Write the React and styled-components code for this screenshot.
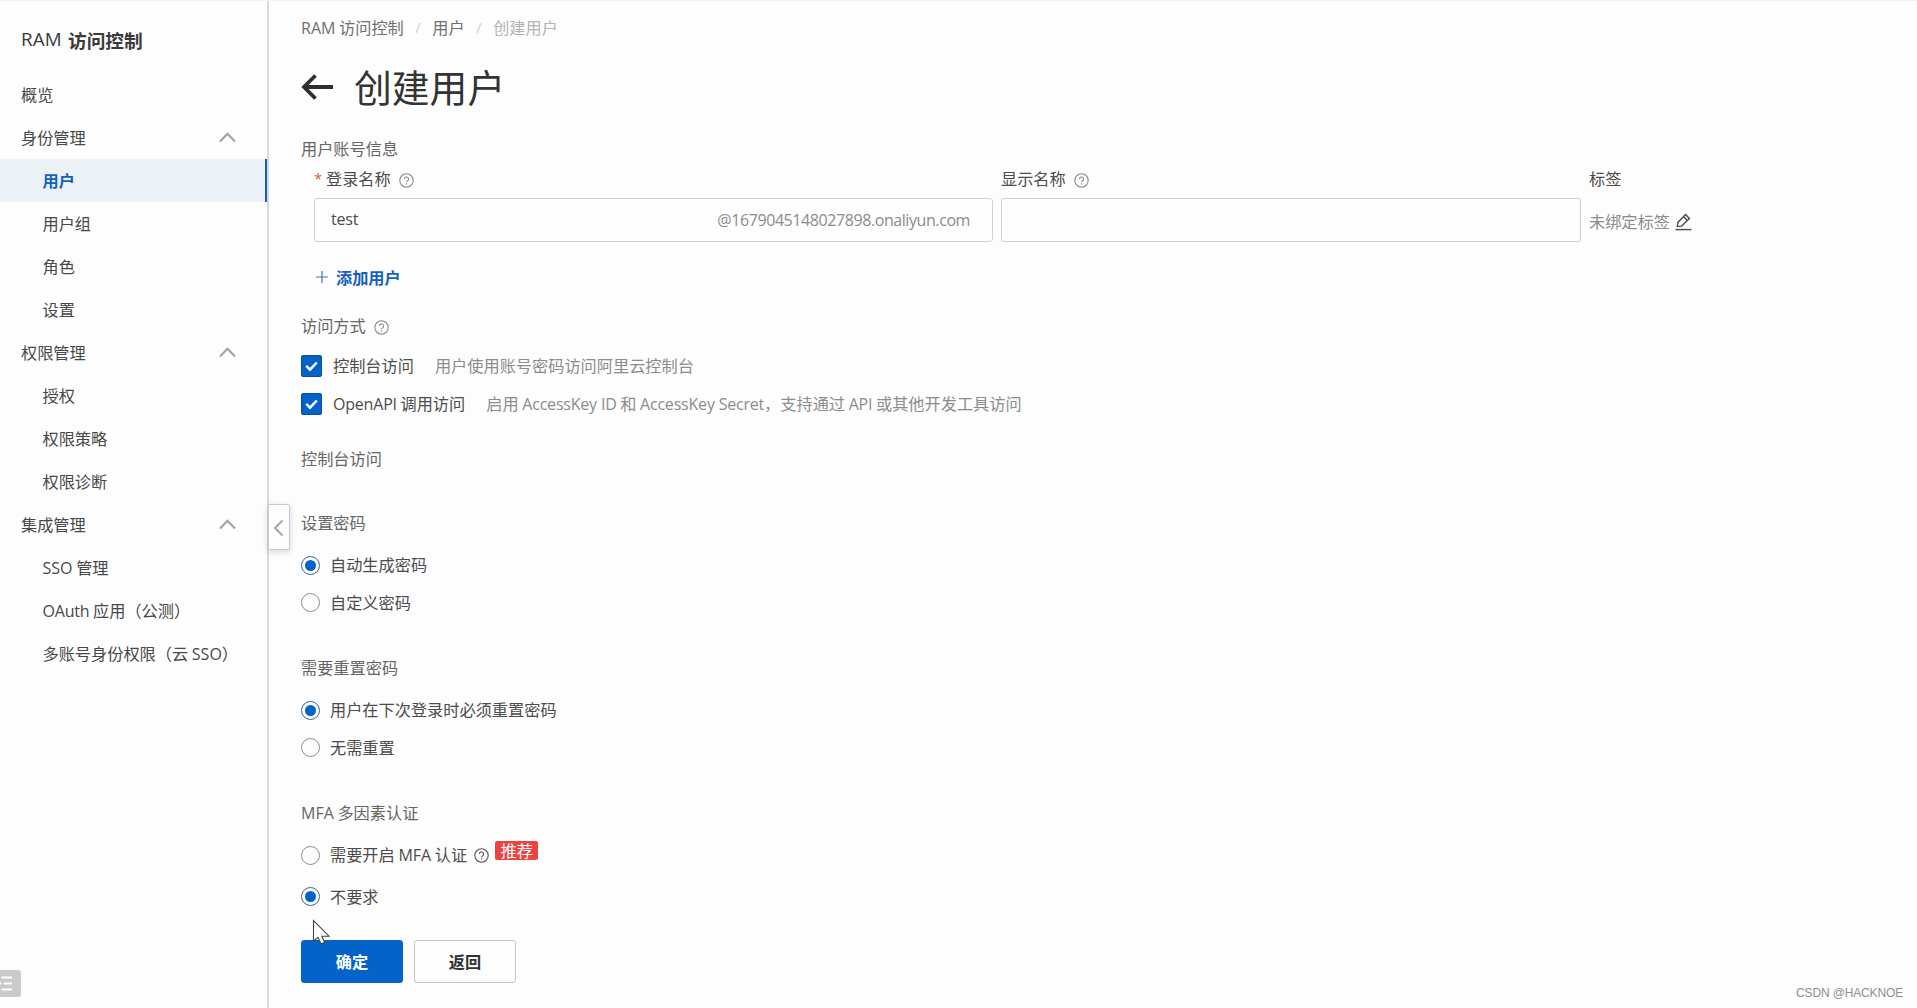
import React, { useState } from "react";
import styled, { createGlobalStyle } from "styled-components";

const Global = createGlobalStyle`
  * { box-sizing: border-box; }
  html, body, #root { height: 100%; margin: 0; }
  body {
    overflow: hidden;
    background: #fdfdfd;
    color: #4c4c4c;
    font-family: "Noto Sans CJK SC", sans-serif;
    font-size: 16.2px;
    line-height: 24px;
  }
`;

const Page = styled.div`
  display: flex;
  height: 1008px;
  width: 1917px;
  position: relative;
  border-top: 1px solid #f1f1f1;
`;

const Latin = styled.span`
  font-family: "Open Sans", "Noto Sans", sans-serif;
  font-size: ${(p) => p.$size || 16}px;
  letter-spacing: ${(p) => (p.$track === undefined ? -0.2 : p.$track)}px;
  font-weight: ${(p) => p.$weight || "inherit"};
  line-height: 1;
`;

/* Sidebar */
const Sidebar = styled.nav`
  width: 269px;
  flex: none;
  border-right: 2px solid #d8d9dc;
  position: relative;
`;
const Brand = styled.h2`
  margin: 0;
  padding: 5px 0 0 21px;
  height: 72px;
  display: flex;
  align-items: center;
  gap: 6px;
  font-size: 18.7px;
  font-weight: 700;
  color: #3a3a3a;
`;
const NavRow = styled.a`
  display: flex;
  align-items: center;
  justify-content: space-between;
  height: 43px;
  padding: 0 31px 0 ${(p) => (p.$sub ? 42.5 : 21)}px;
  white-space: nowrap;
  color: ${(p) => (p.$active ? "#1560bd" : "#484848")};
  font-weight: ${(p) => (p.$active ? 700 : 400)};
  background: ${(p) => (p.$active ? "#ebf1f5" : "transparent")};
  box-shadow: ${(p) => (p.$active ? "inset -2px 0 0 #1560bd" : "none")};
`;
const RaisedText = styled.span`
  padding-bottom: 2px;
`;
const Collapse = styled.button`
  position: absolute;
  left: 268px;
  top: 503px;
  width: 22px;
  height: 46px;
  padding: 2px 1px 0 0;
  display: flex;
  align-items: center;
  justify-content: center;
  background: #fdfdfd;
  border: 1px solid #c9cacc;
  border-radius: 0 2px 2px 0;
  box-shadow: 0 2px 6px rgba(0, 0, 0, 0.16);
`;
const DockTag = styled.div`
  position: absolute;
  left: 0;
  top: 969px;
  width: 21px;
  height: 27px;
  display: flex;
  align-items: center;
  background: #cacaca;
  border-radius: 0 3px 3px 0;
`;

/* Main column */
const Main = styled.main`
  flex: 1;
  padding-left: 32px;
  display: flex;
  flex-direction: column;
`;
const Crumbs = styled.div`
  display: flex;
  align-items: center;
  height: 54px;
  padding-bottom: 2px;
  color: #707070;
`;
const Slash = styled.span`
  width: 28.5px;
  text-align: center;
  font-family: "Open Sans", sans-serif;
  font-size: 15px;
  color: #d0d0d0;
`;
const Muted = styled.span`
  color: ${(p) => p.$tone || "#b4b4b4"};
`;
const TitleRow = styled.div`
  display: flex;
  align-items: center;
  gap: 21px;
  height: 66px;
  padding-bottom: 2px;
`;
const Title = styled.h1`
  margin: -2px 0 0;
  font-size: 37.8px;
  line-height: 48px;
  font-weight: 400;
  color: #333;
`;
const SectionLabel = styled.div`
  display: flex;
  align-items: center;
  gap: 8px;
  height: 24px;
  margin-top: ${(p) => p.$top}px;
  color: #666;
`;
const Fields = styled.div`
  display: grid;
  grid-template-columns: 679px 580px 200px;
  column-gap: 8px;
  margin-left: 13px;
`;
const FieldLabel = styled.label`
  display: flex;
  align-items: center;
  height: 38px;
  padding-bottom: 2px;
  gap: 8px;
`;
const Star = styled.span`
  width: 12px;
  margin-right: -8px;
  color: #d9623f;
  font-family: "Open Sans", sans-serif;
  font-size: 15px;
`;
const InputBox = styled.div`
  display: flex;
  align-items: center;
  justify-content: space-between;
  height: 44px;
  padding: 0 22px 2px 16px;
  border: 1px solid #cfd0d3;
  border-radius: 3px;
`;
const TagCell = styled.div`
  display: flex;
  align-items: center;
  height: 44px;
  padding-top: 1px;
  gap: 5px;
  color: #8c8c8c;
`;
const AddUser = styled.button`
  display: flex;
  align-items: center;
  gap: 8px;
  height: 24px;
  margin: 23px 0 0 15px;
  padding: 0;
  border: 0;
  background: none;
  font: inherit;
  font-weight: 700;
  color: #1560bd;
`;
const CheckRow = styled.div`
  display: flex;
  align-items: center;
  height: 38px;
`;
const CheckSquare = styled.span`
  display: flex;
  align-items: center;
  justify-content: center;
  width: 21px;
  height: 22px;
  margin-right: 11px;
  background: #0463c9;
  border: 1px solid #0a4f9e;
  border-radius: 2px;
`;
const CheckHint = styled.span`
  margin-left: ${(p) => p.$gap}px;
  padding-bottom: 2px;
  color: #8c8c8c;
`;
const OptionGroup = styled.div`
  display: flex;
  flex-direction: column;
  margin-top: ${(p) => p.$top}px;
`;
const RadioRow = styled.label`
  display: flex;
  align-items: center;
  height: ${(p) => p.$height || 37.5}px;
`;
const RadioDot = styled.span`
  display: flex;
  align-items: center;
  justify-content: center;
  width: 19px;
  height: 19px;
  margin-right: 10px;
  border: 1px solid ${(p) => (p.$on ? "#3d6590" : "#84919e")};
  border-radius: 50%;
  &::after {
    content: "";
    width: 11px;
    height: 11px;
    border-radius: 50%;
    background: ${(p) => (p.$on ? "#0463c9" : "transparent")};
  }
`;
const Badge = styled.span`
  display: flex;
  align-items: center;
  justify-content: center;
  width: 43px;
  height: 19px;
  padding-bottom: 1px;
  margin: -10px 0 0 6px;
  border-radius: 2px;
  background: #ec4342;
  color: #fff;
`;
const HelpSlot = styled.span`
  display: flex;
  margin: ${(p) => p.$top}px 0 0 ${(p) => p.$left || 0}px;
`;
const Actions = styled.div`
  display: flex;
  gap: 11px;
  margin-top: 22px;
`;
const Button = styled.button`
  width: 102px;
  height: 43px;
  padding: 0 0 1px;
  border: 1px solid ${(p) => (p.$primary ? "#0463c9" : "#c4c5c9")};
  border-radius: 3px;
  background: ${(p) => (p.$primary ? "#0463c9" : "#fdfdfd")};
  color: ${(p) => (p.$primary ? "#fff" : "#333")};
  font: inherit;
  font-weight: 700;
`;
const Pointer = styled.svg`
  position: absolute;
  left: 312px;
  top: 918px;
`;
const Watermark = styled.div`
  position: absolute;
  right: 14px;
  top: 983px;
  font-family: "Liberation Sans", Arial, sans-serif;
  font-size: 12px;
  line-height: 18px;
  letter-spacing: -0.15px;
  color: #8f8f8f;
`;

const Help = ({ color = "#8a8a8a" }) => (
  <svg width="15" height="15" viewBox="0 0 15 15" fill="none" stroke={color}>
    <circle cx="7.5" cy="7.5" r="6.7" strokeWidth="1.1" />
    <path d="M5.4 6.100a2.100 2.100 0 1 1 3.300 1.700c-.8.5-1.200.8-1.200 1.500" strokeWidth="1.1" />
    <path d="M7.5 10.3v1.2" strokeWidth="1.2" />
  </svg>
);
const ChevronUp = () => (
  <svg width="17" height="11" viewBox="0 0 17 11" fill="none" stroke="#a0a0a0" strokeWidth="2">
    <path d="M1 9.500 8.500 1.800 16 9.500" />
  </svg>
);

const nav = [
  { label: "概览" },
  { label: "身份管理", group: true },
  { label: "用户", sub: true, active: true },
  { label: "用户组", sub: true },
  { label: "角色", sub: true },
  { label: "设置", sub: true },
  { label: "权限管理", group: true },
  { label: "授权", sub: true },
  { label: "权限策略", sub: true },
  { label: "权限诊断", sub: true },
  { label: "集成管理", group: true },
  { label: <><Latin $track={0}>SSO</Latin> 管理</>, sub: true },
  { label: <><Latin>OAuth</Latin> 应用（公测）</>, sub: true },
  { label: <>多账号身份权限（云 <Latin $track={0}>SSO</Latin>）</>, sub: true },
];

const Radio = ({ on, onPick, height, children, extra }) => (
  <RadioRow $height={height} onClick={onPick}>
    <RadioDot $on={on} />
    <RaisedText>{children}</RaisedText>
    {extra}
  </RadioRow>
);

const Check = () => (
  <CheckSquare>
    <svg width="15" height="13" viewBox="0 0 15 13" fill="none" stroke="#fff" strokeWidth="2.5">
      <path d="M2.300 5.800 6 9.600 12.800 2.500" />
    </svg>
  </CheckSquare>
);

export default function App() {
  const [auto, setAuto] = useState(true);
  const [reset, setReset] = useState(true);
  const [mfa, setMfa] = useState(false);
  return (
    <>
      <Global />
      <Page>
        <Sidebar>
          <Brand><Latin $size={18.8} $weight={500} $track={0.2}>RAM</Latin>访问控制</Brand>
          {nav.map((n, i) => (
            <NavRow key={i} $sub={n.sub} $active={n.active}>
              <RaisedText>{n.label}</RaisedText>
              {n.group && <ChevronUp />}
            </NavRow>
          ))}
          <DockTag>
            <svg width="14" height="15" viewBox="0 0 14 15" stroke="#fff" strokeWidth="1.8">
              <path d="M1.5 1.5H12M0 7.5h1.5M4 7.5h8M1.5 13.5H12" />
            </svg>
          </DockTag>
        </Sidebar>
        <Main>
          <Crumbs>
            <span><Latin $track={0}>RAM</Latin> 访问控制</span>
            <Slash>/</Slash>
            <span>用户</span>
            <Slash>/</Slash>
            <Muted>创建用户</Muted>
          </Crumbs>
          <TitleRow>
            <svg width="32" height="28" viewBox="0 0 32 28" fill="none" stroke="#2e2e2e" strokeWidth="3.8">
              <path d="M14.500 2.500 3 14l11.500 11.500M2.500 14H32" />
            </svg>
            <Title>创建用户</Title>
          </TitleRow>

          <SectionLabel $top={15}>用户账号信息</SectionLabel>
          <Fields>
            <FieldLabel><Star>*</Star><span>登录名称</span><HelpSlot $top={4}><Help /></HelpSlot></FieldLabel>
            <FieldLabel><span>显示名称</span><HelpSlot $top={4}><Help /></HelpSlot></FieldLabel>
            <FieldLabel>标签</FieldLabel>
            <InputBox>
              <Latin>test</Latin>
              <Muted $tone="#8c8c8c"><Latin $track={-0.42}>@1679045148027898.onaliyun.com</Latin></Muted>
            </InputBox>
            <InputBox />
            <TagCell>
              未绑定标签
              <HelpSlot $top={3}>
                <svg width="17" height="18" viewBox="0 0 17 18" fill="none" stroke="#4c4c4c" strokeWidth="1.4">
                  <path d="M2.300 13.400 2.900 9.400 10.600 1.600 14.400 5.400 6.600 13.100ZM8.600 3.800l3.600 3.600" />
                  <path d="M.5 16.600h16" />
                </svg>
              </HelpSlot>
            </TagCell>
          </Fields>
          <AddUser>
            <svg width="12" height="12" viewBox="0 0 12 12" stroke="#3c78c0" strokeWidth="1.2">
              <path d="M6 0v12M0 6h12" />
            </svg>
            添加用户
          </AddUser>

          <SectionLabel $top={24}><span>访问方式</span><HelpSlot $top={4}><Help /></HelpSlot></SectionLabel>
          <OptionGroup $top={10}>
            <CheckRow><Check /><RaisedText>控制台访问</RaisedText><CheckHint $gap={21}>用户使用账号密码访问阿里云控制台</CheckHint></CheckRow>
            <CheckRow>
              <Check /><RaisedText><Latin>OpenAPI</Latin> 调用访问</RaisedText>
              <CheckHint $gap={21}>启用 <Latin>AccessKey ID</Latin> 和 <Latin>AccessKey Secret</Latin>，支持通过 <Latin>API</Latin> 或其他开发工具访问</CheckHint>
            </CheckRow>
          </OptionGroup>

          <SectionLabel $top={23}>控制台访问</SectionLabel>
          <SectionLabel $top={40}>设置密码</SectionLabel>
          <OptionGroup $top={12.5}>
            <Radio on={auto} onPick={() => setAuto(true)}>自动生成密码</Radio>
            <Radio on={!auto} onPick={() => setAuto(false)}>自定义密码</Radio>
          </OptionGroup>

          <SectionLabel $top={33.5}>需要重置密码</SectionLabel>
          <OptionGroup $top={12.5}>
            <Radio on={reset} onPick={() => setReset(true)}>用户在下次登录时必须重置密码</Radio>
            <Radio on={!reset} onPick={() => setReset(false)}>无需重置</Radio>
          </OptionGroup>

          <SectionLabel $top={33.5}><span><Latin $track={0}>MFA</Latin> 多因素认证</span></SectionLabel>
          <OptionGroup $top={11}>
            <Radio
              on={mfa}
              height={40}
              onPick={() => setMfa(true)}
              extra={<><HelpSlot $top={1} $left={7}><Help color="#555" /></HelpSlot><Badge>推荐</Badge></>}
            >
              需要开启 <Latin $track={0}>MFA</Latin> 认证
            </Radio>
            <Radio on={!mfa} height={43} onPick={() => setMfa(false)}>不要求</Radio>
          </OptionGroup>

          <Actions>
            <Button $primary>确定</Button>
            <Button>返回</Button>
          </Actions>
        </Main>
        <Collapse>
          <svg width="11" height="18" viewBox="0 0 11 18" fill="none" stroke="#a8a8a8" strokeWidth="2">
            <path d="M9.500 1.500 2 9l7.500 7.500" />
          </svg>
        </Collapse>
        <Pointer width="20" height="27" viewBox="0 0 20 27" fill="#fff" stroke="#444" strokeWidth="1.1">
          <path d="M1.500 1.500V22L6 18.300 9 25 12.600 23.300 9.900 17.200H17Z" />
        </Pointer>
        <Watermark>CSDN @HACKNOE</Watermark>
      </Page>
    </>
  );
}
